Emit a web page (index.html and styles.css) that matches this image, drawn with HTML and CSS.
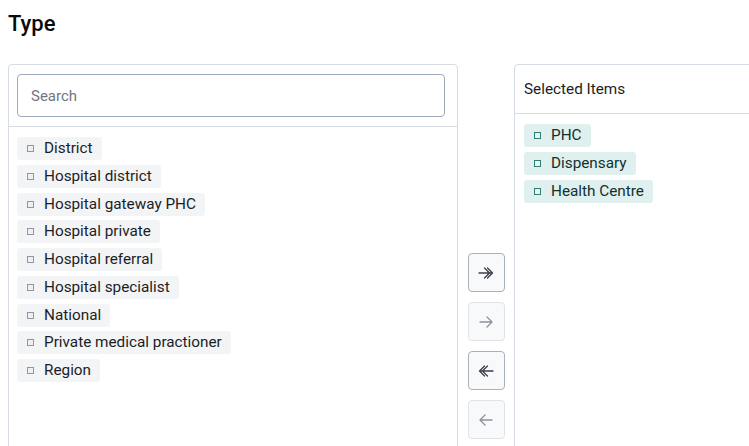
FILE: index.html
```html
<!DOCTYPE html>
<html>
<head>
<meta charset="utf-8">
<link rel="stylesheet" href="styles.css">
</head>
<body>
<h1 class="title">Type</h1>
<div class="transfer">
  <div class="panel panel-left">
    <div class="search-wrap">
      <input class="search" type="text" placeholder="Search">
    </div>
    <ul class="list">
      <li class="chip"><span class="box"></span>District</li>
      <li class="chip"><span class="box"></span>Hospital district</li>
      <li class="chip"><span class="box"></span>Hospital gateway PHC</li>
      <li class="chip"><span class="box"></span>Hospital private</li>
      <li class="chip"><span class="box"></span>Hospital referral</li>
      <li class="chip"><span class="box"></span>Hospital specialist</li>
      <li class="chip"><span class="box"></span>National</li>
      <li class="chip"><span class="box"></span>Private medical practioner</li>
      <li class="chip"><span class="box"></span>Region</li>
    </ul>
  </div>
  <div class="actions">
    <button class="btn" aria-label="Select all">
      <svg width="20" height="20" viewBox="0 0 20 20" fill="none" stroke="currentColor" stroke-width="1.3" stroke-linecap="round" stroke-linejoin="round"><path d="M3 10h13.5M8.5 5l5 5-5 5M11.5 5l5 5-5 5"/></svg>
    </button>
    <button class="btn btn-disabled" aria-label="Select">
      <svg width="20" height="20" viewBox="0 0 20 20" fill="none" stroke="currentColor" stroke-width="1.3" stroke-linecap="round" stroke-linejoin="round"><path d="M4 10h12M11 5l5 5-5 5"/></svg>
    </button>
    <button class="btn" aria-label="Deselect all">
      <svg width="20" height="20" viewBox="0 0 20 20" fill="none" stroke="currentColor" stroke-width="1.3" stroke-linecap="round" stroke-linejoin="round"><path d="M17 10H3.5M11.5 5l-5 5 5 5M8.5 5l-5 5 5 5"/></svg>
    </button>
    <button class="btn btn-disabled" aria-label="Deselect">
      <svg width="20" height="20" viewBox="0 0 20 20" fill="none" stroke="currentColor" stroke-width="1.3" stroke-linecap="round" stroke-linejoin="round"><path d="M16 10H4M9 5l-5 5 5 5"/></svg>
    </button>
  </div>
  <div class="panel panel-right">
    <div class="panel-header">Selected Items</div>
    <ul class="list">
      <li class="chip chip-selected"><span class="box"></span>PHC</li>
      <li class="chip chip-selected"><span class="box"></span>Dispensary</li>
      <li class="chip chip-selected"><span class="box"></span>Health Centre</li>
    </ul>
  </div>
</div>
</body>
</html>
```
FILE: styles.css
```css
html, body {
  margin: 0;
  padding: 0;
  overflow: hidden;
  background: #ffffff;
}
body {
  padding: 8px;
  font-family: Roboto, "Liberation Sans", sans-serif;
  color: #1b1e26;
}
.title {
  margin: 3px 0 27px 0;
  font-size: 22px;
  line-height: 26px;
  font-weight: 500;
  color: #0a0a0a;
}
.transfer {
  display: flex;
  align-items: stretch;
  width: 900px;
}
.panel {
  width: 450px;
  height: 562px;
  box-sizing: border-box;
  border: 1px solid #d5dce4;
  border-radius: 4px;
  flex-shrink: 0;
}
.search-wrap {
  padding: 9px 12px 9px 8px;
  border-bottom: 1px solid #d5dce4;
}
.search {
  display: block;
  width: 100%;
  height: 43px;
  box-sizing: border-box;
  border: 1px solid #a0abb9;
  border-radius: 4px;
  padding: 0 13px;
  font-family: Roboto, "Liberation Sans", sans-serif;
  font-size: 15px;
  color: #1b1e26;
  outline: none;
}
.search::placeholder {
  color: #6e7681;
}
.list {
  list-style: none;
  margin: 0;
  padding: 10px 8px 9px;
  display: flex;
  flex-direction: column;
  align-items: flex-start;
  gap: 4.75px;
}
.panel-right .list {
  padding: 10px 9px 9px;
}
.chip {
  display: flex;
  align-items: center;
  height: 23px;
  padding: 0 9px 0 10px;
  background: #f3f4f6;
  border-radius: 3px;
  font-size: 15.3px;
  line-height: 23px;
  color: #1b1e26;
  white-space: nowrap;
}
.box {
  width: 5px;
  height: 5px;
  border: 1px solid #8e97a3;
  background: #eef0f3;
  margin-right: 10px;
  flex-shrink: 0;
}
.chip-selected {
  background: #dff0ef;
  color: #11302e;
}
.chip-selected .box {
  border-color: #2f7d74;
  background: #e6f4f2;
}
.actions {
  width: 56px;
  flex-shrink: 0;
  display: flex;
  flex-direction: column;
  align-items: center;
  justify-content: center;
  gap: 10px;
  padding-top: 2px;
  box-sizing: border-box;
}
.btn {
  width: 37px;
  height: 39px;
  box-sizing: border-box;
  border: 1px solid #a7b0bc;
  border-radius: 4px;
  background: #f8f9fb;
  color: #3b424c;
  display: flex;
  align-items: center;
  justify-content: center;
  padding: 0;
}
.btn-disabled {
  border-color: #dfe3e8;
  color: #8a929c;
}
.panel-header {
  height: 49px;
  box-sizing: border-box;
  border-bottom: 1px solid #d5dce4;
  padding: 0 9px;
  display: flex;
  align-items: center;
  font-size: 15.3px;
  color: #1b1e26;
}
```
